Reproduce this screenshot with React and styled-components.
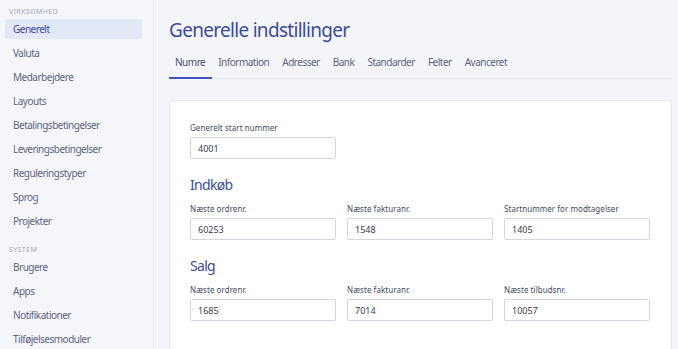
import React from 'react'
import styled, { createGlobalStyle } from 'styled-components'

const GlobalStyle = createGlobalStyle`
  html, body {
    margin: 0;
    padding: 0;
    background: #f4f5f9;
    font-family: 'Noto Sans', 'Open Sans', sans-serif;
  }
  * { box-sizing: border-box; }
`;

const Layout = styled.div`
  display: flex;
  width: 678px;
  height: 349px;
  overflow: hidden;
`;

const Sidebar = styled.nav`
  width: 154px;
  flex-shrink: 0;
  background: #f5f6fa;
  border-right: 1px solid #e6e8ef;
  padding: 6px 11px 0 5px;
`;

const SectionLabel = styled.div`
  font-size: 7px;
  letter-spacing: 0.4px;
  color: #a3a7bd;
  text-transform: uppercase;
  padding-left: 4px;
  height: 13px;
  line-height: 12px;
  margin-top: ${p => p.$top || 0}px;
`;

const NavItem = styled.div`
  height: 20px;
  margin-bottom: 4px;
  padding-left: 8px;
  display: flex;
  align-items: center;
  font-size: 10px;
  letter-spacing: -0.5px;
  border-radius: 3px;
  color: ${p => p.$active ? '#3c4a9e' : '#5f6482'};
  background: ${p => p.$active ? '#e3e8f7' : 'transparent'};
`;

const Main = styled.main`
  flex: 1;
  padding: 14px 7px 0 15px;
`;

const Title = styled.h1`
  margin: 0;
  font-size: 19px;
  letter-spacing: -0.7px;
  font-weight: 400;
  color: #3e4b9a;
  line-height: 32px;
`;

const Tabs = styled.div`
  display: flex;
  margin-top: 1px;
  border-bottom: 1px solid #e2e4ec;
`;

const Tab = styled.div`
  font-size: 10px;
  letter-spacing: -0.5px;
  padding: 0 7px 0 6px;
  height: 32px;
  line-height: 31px;
  color: ${p => p.$active ? '#4a4f73' : '#5f6482'};
  border-bottom: 2px solid ${p => p.$active ? '#4353c4' : 'transparent'};
  margin-bottom: -1px;
`;

const Card = styled.section`
  margin-top: 21px;
  background: #fff;
  border: 1px solid #e7e9f0;
  border-radius: 3px;
  padding: 22px 21px 30px 20px;
  height: 300px;
`;

const Grid = styled.div`
  display: grid;
  grid-template-columns: repeat(3, 146px);
  column-gap: 11px;
`;

const Field = styled.div`
  display: flex;
  flex-direction: column;
`;

const Label = styled.label`
  font-size: 8px;
  letter-spacing: 0.05px;
  color: #474b60;
  margin-bottom: 4px;
  line-height: 10px;
`;

const Input = styled.div`
  height: 22px;
  border: 1px solid #d3d6df;
  border-radius: 2px;
  padding-left: 7px;
  display: flex;
  align-items: center;
  font-size: 9px;
  color: #3a3c4a;
`;

const Heading = styled.h2`
  margin: ${p => p.$top}px 0 10px;
  font-size: 14px;
  letter-spacing: -0.7px;
  font-weight: 400;
  color: #3e4b9a;
  line-height: 18px;
`;

const company = ['Generelt', 'Valuta', 'Medarbejdere', 'Layouts', 'Betalingsbetingelser', 'Leveringsbetingelser', 'Reguleringstyper', 'Sprog', 'Projekter']
const system = ['Brugere', 'Apps', 'Notifikationer', 'Tilføjelsesmoduler']
const tabs = ['Numre', 'Information', 'Adresser', 'Bank', 'Standarder', 'Felter', 'Avanceret']

const purchase = [
  { label: 'Næste ordrenr.', value: '60253' },
  { label: 'Næste fakturanr.', value: '1548' },
  { label: 'Startnummer for modtagelser', value: '1405' },
]
const sales = [
  { label: 'Næste ordrenr.', value: '1685' },
  { label: 'Næste fakturanr.', value: '7014' },
  { label: 'Næste tilbudsnr.', value: '10057' },
]

const FieldRow = ({ items }) => (
  <Grid>
    {items.map((f, i) => (
      <Field key={i}>
        <Label>{f.label}</Label>
        <Input>{f.value}</Input>
      </Field>
    ))}
  </Grid>
)

export default function App() {
  return (
    <Layout>
      <GlobalStyle />
      <Sidebar>
        <SectionLabel>Virksomhed</SectionLabel>
        {company.map((n, i) => <NavItem key={n} $active={i === 0}>{n}</NavItem>)}
        <SectionLabel $top={13}>System</SectionLabel>
        {system.map(n => <NavItem key={n}>{n}</NavItem>)}
      </Sidebar>
      <Main>
        <Title>Generelle indstillinger</Title>
        <Tabs>
          {tabs.map((t, i) => <Tab key={t} $active={i === 0}>{t}</Tab>)}
        </Tabs>
        <Card>
          <Grid>
            <Field>
              <Label>Generelt start nummer</Label>
              <Input>4001</Input>
            </Field>
          </Grid>
          <Heading $top={17}>Indkøb</Heading>
          <FieldRow items={purchase} />
          <Heading $top={17}>Salg</Heading>
          <FieldRow items={sales} />
        </Card>
      </Main>
    </Layout>
  )
}
